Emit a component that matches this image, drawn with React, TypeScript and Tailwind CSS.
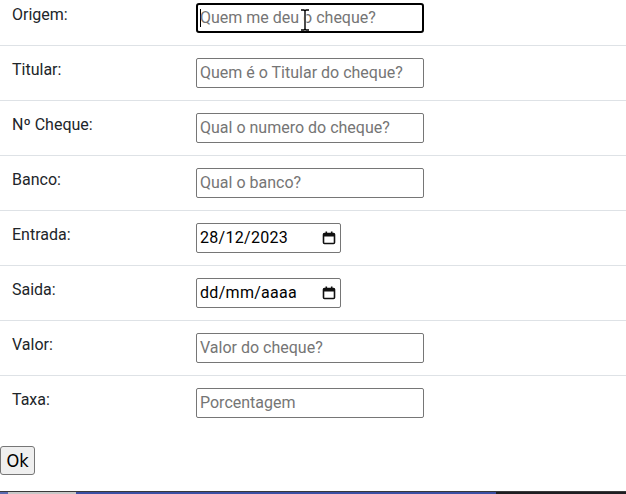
import React from "react";

const rows: { label: string; type: "text" | "date"; placeholder?: string; value?: string }[] = [
  { label: "Origem:", type: "text", placeholder: "Quem me deu o cheque?" },
  { label: "Titular:", type: "text", placeholder: "Quem é o Titular do cheque?" },
  { label: "Nº Cheque:", type: "text", placeholder: "Qual o numero do cheque?" },
  { label: "Banco:", type: "text", placeholder: "Qual o banco?" },
  { label: "Entrada:", type: "date", value: "28/12/2023" },
  { label: "Saida:", type: "date", value: "dd/mm/aaaa" },
  { label: "Valor:", type: "text", placeholder: "Valor do cheque?" },
  { label: "Taxa:", type: "text", placeholder: "Porcentagem" },
];

function CalIcon() {
  return (
    <svg width="14" height="14" viewBox="0 0 14 14" className="shrink-0">
      <rect x="1.5" y="2.5" width="11" height="10" rx="1" fill="none" stroke="#111" strokeWidth="1.6" />
      <rect x="1.5" y="2.5" width="11" height="3" fill="#111" />
      <rect x="3.5" y="0.5" width="1.6" height="3" fill="#111" />
      <rect x="8.9" y="0.5" width="1.6" height="3" fill="#111" />
    </svg>
  );
}

export default function App() {
  return (
    <div className="relative h-[494px] w-[626px] overflow-hidden bg-white" style={{ fontFamily: "Roboto, 'Noto Sans', sans-serif" }}>
      <div className="flex flex-col">
        {rows.map((r, i) => (
          <div
            key={r.label}
            className={`grid grid-cols-[196px_1fr] ${i === 0 ? "pt-[3px]" : "pt-3"} pb-3 ${i < rows.length - 1 ? "border-b border-[#dee2e6]" : ""}`}
          >
            <div className="pl-3 text-[16px] leading-6 text-[#212529]">{r.label}</div>
            <div className="flex">
              {r.type === "text" ? (
                i === 0 ? (
                  <div className="relative flex h-[30px] w-[228px] items-center rounded-[3px] border-2 border-black pl-[2px] text-[16px] text-[#757575]">
                    <span className="mr-[-1px] h-[18px] w-px bg-black" />
                    <span>{r.placeholder}</span>
                  </div>
                ) : (
                  <div className="flex h-[30px] w-[228px] items-center rounded-[2px] border border-[#767676] pl-[3px] text-[16px] text-[#757575]">
                    {r.placeholder}
                  </div>
                )
              ) : (
                <div className="flex h-[30px] w-[145px] items-center justify-between rounded-[2px] border border-[#767676] pl-[3px] pr-[4px] text-[16px] tracking-[0.3px] text-black">
                  <span>{r.value}</span>
                  <CalIcon />
                </div>
              )}
            </div>
          </div>
        ))}
      </div>
      <div className="pt-4">
        <button
          className="h-[29px] w-[35px] rounded-[3px] border border-[#767676] bg-[#efefef] text-[18px] leading-none text-black"
          style={{ fontFamily: "'Liberation Sans Narrow', 'DejaVu Sans Condensed', 'Liberation Sans', sans-serif" }}
        >
          Ok
        </button>
      </div>
      <div className="absolute bottom-0 left-0 flex h-[3px] w-full flex-col">
        <div className="h-px w-full bg-[#3a3a3a]" />
        <div className="flex h-[2px] w-full">
          <div className="w-[8px] bg-[#5a6ab0]" />
          <div className="w-[68px] bg-[#c8c8c8]" />
          <div className="flex-1 bg-[#3b4fa3]" />
          <div className="w-[130px] bg-[#1e1e22]" />
        </div>
      </div>
      <svg className="absolute left-[299px] top-[9px]" width="12" height="22" viewBox="0 0 12 22">
        <path d="M2 1h3l1 1 1-1h3M6 2v18M2 21h3l1-1 1 1h3" fill="none" stroke="#fff" strokeWidth="3" />
        <path d="M2 1h3l1 1 1-1h3M6 2v18M2 21h3l1-1 1 1h3" fill="none" stroke="#000" strokeWidth="1.4" />
      </svg>
    </div>
  );
}
